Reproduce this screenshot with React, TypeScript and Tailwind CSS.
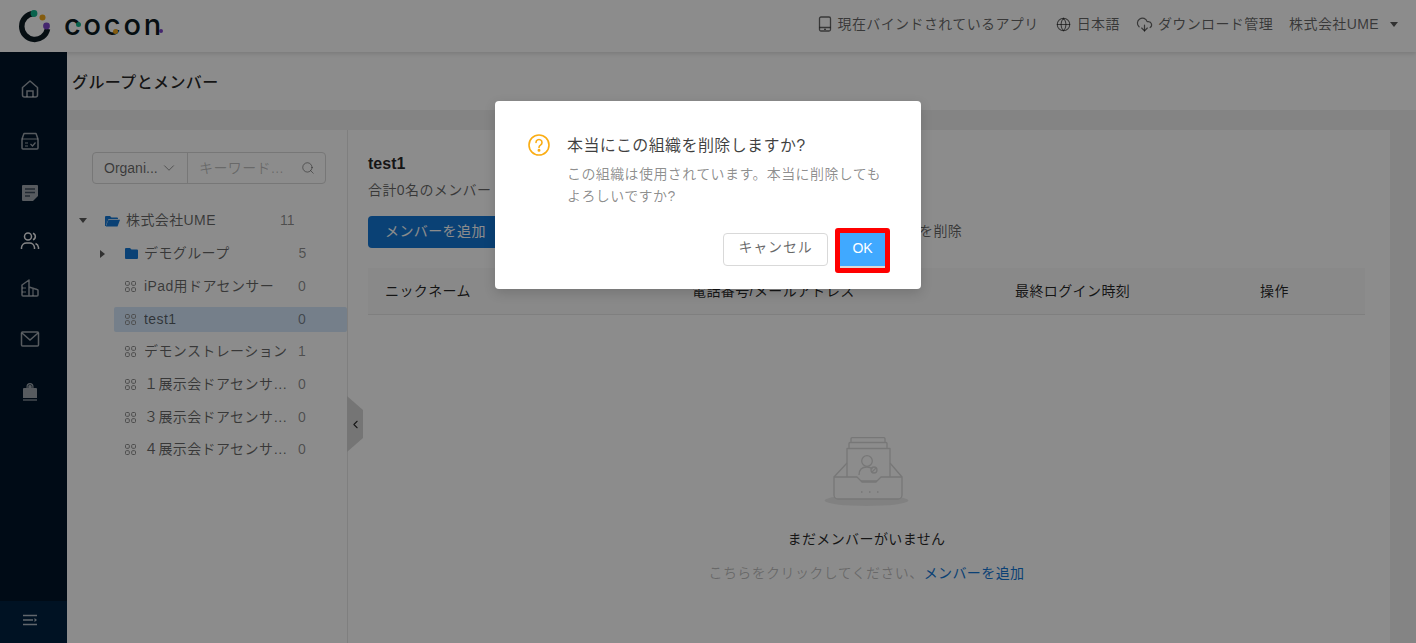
import { ChevronDown, ChevronLeft, CloudDownload, Globe, Search } from 'lucide-react';

const FONT = "font-['Liberation_Sans','Noto_Sans_CJK_JP',sans-serif]";

const treeItems = [
  { name: 'iPad用ドアセンサー', count: 0 },
  { name: 'test1', count: 0, active: true },
  { name: 'デモンストレーション', count: 1 },
  { name: '１展示会ドアセンサー1', count: 0 },
  { name: '３展示会ドアセンサー1', count: 0 },
  { name: '４展示会ドアセンサー1', count: 0 },
];

// spacing between the side icons is not even in the picture
const sideGaps = ['mt-[27px]', 'mt-[32px]', 'mt-[32px]', 'mt-[28px]', 'mt-[27px]', 'mt-[31px]', 'mt-[33px]'];

function Logo() {
  return (
    <div className="mb-[1px] flex items-center">
      <svg width="34" height="34" viewBox="0 0 34 34" fill="none">
        <path d="M15.5 4.5A13 13 0 1 0 29.5 20" stroke="#0c1a22" strokeWidth="5.5" strokeLinecap="butt" />
        <circle cx="16" cy="4.5" r="3.4" fill="#11b58c" />
        <circle cx="24.5" cy="8.5" r="3" fill="#f0a81c" />
        <circle cx="28.5" cy="17" r="3.4" fill="#7c45c9" />
      </svg>
      <div className="relative ml-[12px] h-[34px] w-[104px]">
        <span className="font-['Inter',sans-serif] text-[29px] font-medium leading-[32px] tracking-[2.8px] text-[#0c1a22]">cocon</span>
        <span className="absolute left-[12px] top-[13px] h-[5px] w-[5px] rounded-full bg-[#11b58c]" />
        <span className="absolute left-[49px] top-[20px] h-[5px] w-[5px] rounded-full bg-[#f0a81c]" />
        <span className="absolute left-[95px] top-[20px] h-[4px] w-[4px] rounded-full bg-[#7c45c9]" />
      </div>
    </div>
  );
}

function SideIcon({ index }: { index: number }) {
  const common = { width: 20, height: 20, viewBox: '0 0 20 20', fill: 'none', stroke: '#ffffff', strokeOpacity: index === 3 ? 0.95 : 0.62, strokeWidth: 1.5 };
  switch (index) {
    case 0:
      return (
        <svg {...common}>
          <path d="M2.5 8.5 10 2l7.5 6.5V16a2 2 0 0 1-2 2h-11a2 2 0 0 1-2-2z" strokeLinejoin="round" />
          <path d="M7 18v-6h6v6" />
        </svg>
      );
    case 1:
      return (
        <svg {...common}>
          <path d="M2 8 4 2.5h12L18 8v9a1 1 0 0 1-1 1H3a1 1 0 0 1-1-1z" strokeLinejoin="round" />
          <path d="M2 8h16M5 12h3M5 15h3M10.5 13l2 2 3-3.5" strokeWidth="1.2" />
        </svg>
      );
    case 2:
      return (
        <svg {...common} stroke="none">
          <path d="M3 2h14a1 1 0 0 1 1 1v10l-5 5H3a1 1 0 0 1-1-1V3a1 1 0 0 1 1-1z" fill="#ffffff" fillOpacity="0.62" />
          <path d="M5 6h10M5 9.5h10M5 13h5" stroke="#001529" strokeWidth="1.4" />
        </svg>
      );
    case 3:
      return (
        <svg {...common}>
          <circle cx="8" cy="5.5" r="3.5" />
          <path d="M1.500 18v-1.500A5 5 0 0 1 6.500 12h3a5 5 0 0 1 5 4.500V18M13 2.200a3.500 3.500 0 0 1 0 6.600M15.500 12.500a5 5 0 0 1 3 4V18" />
        </svg>
      );
    case 4:
      return (
        <svg {...common}>
          <path d="M3 18a1 1 0 0 1-1-1V7l7-5v16zM9 9l8 2.500a1 1 0 0 1 1 1V17a1 1 0 0 1-1 1H9" strokeLinejoin="round" />
          <path d="M2 10h4M2 14h4M13 11v7" strokeWidth="1.2" />
        </svg>
      );
    case 5:
      return (
        <svg {...common}>
          <rect x="1.500" y="3" width="17" height="14" rx="1" />
          <path d="m2 4 8 7 8-7" />
        </svg>
      );
    default:
      return (
        <svg {...common} stroke="none">
          <path d="M6.500 6V4.500a3.500 3.500 0 0 1 7 0V6h2.500a1 1 0 0 1 1 1v9H3V7a1 1 0 0 1 1-1z" fill="#ffffff" fillOpacity="0.62" />
          <path d="M8 6V4.500a2 2 0 0 1 4 0V6" stroke="#001529" strokeWidth="1" />
          <path d="M3 18h14" stroke="#ffffff" strokeOpacity="0.62" strokeWidth="1.2" />
        </svg>
      );
  }
}

function GroupIcon() {
  return (
    <svg width="11" height="11" viewBox="0 0 11 11" fill="none" stroke="#8c8c8c" strokeWidth="1" className="shrink-0">
      <rect x="0.5" y="0.5" width="3.8" height="3.8" rx="1" />
      <rect x="6.7" y="0.5" width="3.8" height="3.8" rx="1" />
      <rect x="0.5" y="6.7" width="3.8" height="3.8" rx="1" />
      <rect x="6.7" y="6.7" width="3.8" height="3.8" rx="1" />
    </svg>
  );
}

function FolderOpen() {
  return (
    <svg width="15" height="12" viewBox="0 0 15 12" className="shrink-0">
      <path d="M0 2a1 1 0 0 1 1-1h4l1.500 1.500H12a1 1 0 0 1 1 1V4H3.500L1.300 10 1 3.500V11H0z" fill="#1377d5" />
      <path d="M3.500 4.800H15l-2.500 6.700H.8z" fill="#1377d5" />
    </svg>
  );
}

function EmptyBox() {
  return (
    <svg width="85" height="70" viewBox="0 0 85 70" fill="none" stroke="#d9d9d9" strokeWidth="1.3" strokeLinejoin="round">
      <ellipse cx="42.500" cy="63.500" rx="42" ry="5.500" fill="#ececec" stroke="none" />
      <rect x="27" y="0.700" width="34" height="8" rx="1" fill="#ffffff" />
      <rect x="25" y="5.500" width="38" height="8" rx="1" fill="#ffffff" />
      <path d="M23 44V11.500h43V44z" fill="#ffffff" />
      <circle cx="43" cy="24" r="5.300" />
      <path d="M35 38c0-5 3-8 8-8 2.500 0 4 .8 5.500 2" />
      <circle cx="50" cy="33" r="3" />
      <path d="m48 35 4-4" />
      <path d="M23 26 10 40M66 26l12 14" />
      <path d="M10 40h23l5 5h14l5-5h21v18a4 4 0 0 1-4 4H14a4 4 0 0 1-4-4z" fill="#ffffff" />
      <path d="M37 55h1.500M45 55h1.500M53 55h1.500" />
    </svg>
  );
}

export default function App() {
  return (
    <div className={`${FONT} relative flex h-[643px] w-[1416px] flex-col overflow-hidden bg-white text-[14px] tracking-[0.4px] text-black/85`}>
      <header className="z-10 flex h-[52px] shrink-0 items-center justify-between bg-white pl-[18px] pr-[18px] shadow-[0_2px_4px_rgba(0,0,0,0.12)]">
        <Logo />
        <div className="mb-[4px] flex items-center text-black/60">
          <svg width="14" height="16" viewBox="0 0 14 16" fill="none" stroke="currentColor" strokeWidth="1.3" className="mr-[5px]">
            <rect x="1.500" y="1" width="11" height="14" rx="1.500" />
            <path d="M1.500 11.500h11M6 13.300h2" />
          </svg>
          <span>現在バインドされているアプリ</span>
          <Globe size={15} strokeWidth={1.7} className="ml-[17px] mr-[6px]" />
          <span>日本語</span>
          <CloudDownload size={17} strokeWidth={1.7} className="ml-[16px] mr-[5px]" />
          <span>ダウンロード管理</span>
          <span className="ml-[16px]">株式会社UME</span>
          <span className="ml-[11px] h-0 w-0 border-x-[4px] border-t-[5px] border-x-transparent border-t-black/65" />
        </div>
      </header>

      <div className="flex min-h-0 flex-1">
        <aside className="flex w-[67px] shrink-0 flex-col justify-between bg-[#001529]">
          <div className="flex flex-col items-center pr-[7px]">
            {[0, 1, 2, 3, 4, 5, 6].map((i) => (
              <div key={i} className={sideGaps[i]}>
                <SideIcon index={i} />
              </div>
            ))}
          </div>
          <div className="flex h-[42px] items-center justify-center bg-[#002140] pb-[5px] pr-[7px]">
            <svg width="14" height="12" viewBox="0 0 14 12" fill="none" stroke="#ffffff" strokeOpacity="0.7" strokeWidth="1.4">
              <path d="M0 1.500h14M0 6h10M0 10.500h14" />
              <path d="M11.500 4v4l2.500-2z" fill="#ffffff" fillOpacity="0.7" stroke="none" />
            </svg>
          </div>
        </aside>

        <main className="flex min-w-0 flex-1 flex-col bg-[#f0f0f0]">
          <div className="flex h-[58px] shrink-0 items-center bg-white pl-[5px] pt-[3px] text-[16px] font-medium text-black/85">グループとメンバー</div>
          <div className="flex min-h-0 flex-1 pt-[20px] pr-[26px]">
            <div className="flex min-w-0 flex-1 bg-white">
              <section className="relative w-[281px] shrink-0 border-r border-[#e8e8e8] pl-[25px] pt-[22px]">
                <div className="flex h-[32px] w-[234px] rounded-[4px] border border-[#d9d9d9] text-black/60">
                  <div className="flex w-[95px] items-center justify-between border-r border-[#d9d9d9] pl-[11px] pr-[9px] tracking-normal">
                    <span>Organi...</span>
                    <ChevronDown size={18} strokeWidth={1.1} className="text-black/50" />
                  </div>
                  <div className="flex flex-1 items-center justify-between pl-[11px] pr-[10px] text-black/25">
                    <span>キーワード...</span>
                    <Search size={14} strokeWidth={1.5} className="text-black/45" />
                  </div>
                </div>

                <div className="mt-[20px] flex h-[33px] items-center text-black/60">
                  <span className="ml-[-13px] h-0 w-0 border-x-[4px] border-t-[5px] border-x-transparent border-t-black/65" />
                  <span className="ml-[18px] mr-[6px]"><FolderOpen /></span>
                  <span>株式会社UME</span>
                  <span className="ml-[64px] tracking-normal text-black/45">11</span>
                </div>
                <div className="flex h-[33px] items-center text-black/60">
                  <span className="ml-[8px] h-0 w-0 border-y-[4px] border-l-[5px] border-y-transparent border-l-black/65" />
                  <svg width="13" height="11" viewBox="0 0 13 11" className="ml-[20px] mr-[6px] shrink-0">
                    <path d="M0 1a1 1 0 0 1 1-1h4l1.500 1.500H12a1 1 0 0 1 1 1V10a1 1 0 0 1-1 1H1a1 1 0 0 1-1-1z" fill="#1377d5" />
                  </svg>
                  <span>デモグループ</span>
                  <span className="ml-[69px] text-black/45">5</span>
                </div>

                <div className="ml-[22px] flex flex-col">
                  {treeItems.map((item) => (
                    <div key={item.name} className="flex h-[32.700px] items-center">
                      <div className={`flex h-[25px] w-[233px] items-center rounded-[2px] pl-[11px] text-black/60 ${item.active ? 'bg-[#d5e8fb]' : ''}`}>
                        <GroupIcon />
                        <span className="ml-[8px] w-[145px] truncate">{item.name}</span>
                        <span className="ml-[9px] text-black/45">{item.count}</span>
                      </div>
                    </div>
                  ))}
                </div>

                <div className="absolute left-[280px] top-[266px] flex h-[56px] w-[16px] items-center justify-center bg-[#d6d6d6] [clip-path:polygon(0_0,100%_25%,100%_75%,0_100%)]">
                  <ChevronLeft size={13} strokeWidth={2} className="text-black/80" />
                </div>
              </section>

              <section className="flex min-w-0 flex-1 flex-col pl-[20px] pr-[25px] pt-[24px]">
                <div className="text-[16px] font-bold leading-[20px] tracking-normal">test1</div>
                <div className="mt-[6px] leading-[20px] text-black/60">合計0名のメンバー</div>
                <div className="mt-[16px] flex h-[32px] items-center">
                  <div className="flex h-[32px] w-[132px] items-center rounded-[4px] bg-[#1377d5] pb-[2px] pl-[17px] text-white">メンバーを追加</div>
                  <span className="mb-[2px] ml-[419px] whitespace-nowrap text-black/60">を削除</span>
                </div>
                <div className="mt-[20px] flex h-[47px] items-center border-b border-[#e8e8e8] bg-[#fafafa] pl-[17px] text-black/85">
                  <span className="w-[307px]">ニックネーム</span>
                  <span className="w-[323px]">電話番号/メールアドレス</span>
                  <span className="w-[245px]">最終ログイン時刻</span>
                  <span>操作</span>
                </div>
                <div className="flex flex-1 flex-col items-center pt-[122px]">
                  <EmptyBox />
                  <div className="mt-[22px] leading-[20px]">まだメンバーがいません</div>
                  <div className="mt-[14px] leading-[20px] text-black/25">
                    こちらをクリックしてください、<span className="text-[#1377d5]">メンバーを追加</span>
                  </div>
                </div>
              </section>
            </div>
          </div>
        </main>
      </div>

      <div className="absolute inset-0 z-20 bg-black/45">
        <div className="ml-[495px] mt-[101px] flex h-[188px] w-[426px] flex-col rounded-[4px] bg-white px-[33px] pt-[33px] shadow-[0_4px_12px_rgba(0,0,0,0.15)]">
          <div className="flex">
            <svg width="22" height="22" viewBox="0 0 22 22" fill="none" stroke="#faad14" strokeWidth="1.6" className="shrink-0">
              <circle cx="11" cy="11" r="10" />
              <path d="M8 8.500a3 3 0 1 1 4.500 2.600c-1 .6-1.500 1.200-1.500 2.400" strokeLinecap="round" />
              <circle cx="11" cy="16.300" r="0.700" fill="#faad14" />
            </svg>
            <div className="ml-[17px] min-w-0 pt-[1px]">
              <div className="text-[16px] leading-[22px] text-black/75">本当にこの組織を削除しますか?</div>
              <div className="mt-[6px] w-[318px] leading-[22px] text-black/45">この組織は使用されています。本当に削除してもよろしいですか?</div>
            </div>
          </div>
          <div className="mt-[26px] flex justify-end">
            <button type="button" className="h-[33px] w-[105px] rounded-[4px] border border-[#d9d9d9] bg-white pb-[5px] tracking-[0.8px] text-black/60">キャンセル</button>
            <button type="button" className="ml-[7px] mr-[-2px] mt-[-5px] h-[45px] w-[55px] rounded-[3px] border-[5px] border-[#ff0000] bg-[#40a9ff] pb-[5px] tracking-normal text-white shadow-[inset_0_-2px_0_#d9d9d9]">OK</button>
          </div>
        </div>
      </div>
    </div>
  );
}
